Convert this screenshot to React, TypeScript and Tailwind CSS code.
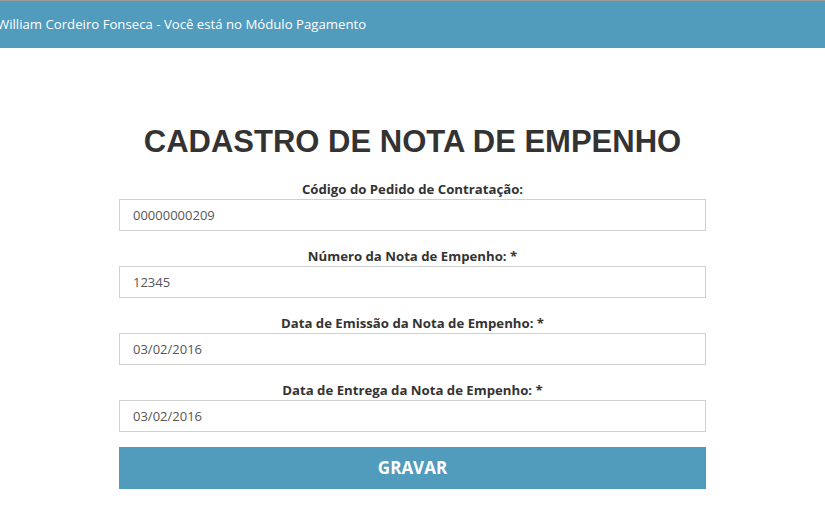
const fields = [
  { label: "Código do Pedido de Contratação:", value: "00000000209" },
  { label: "Número da Nota de Empenho: *", value: "12345" },
  { label: "Data de Emissão da Nota de Empenho: *", value: "03/02/2016" },
  { label: "Data de Entrega da Nota de Empenho: *", value: "03/02/2016" },
];

export default function App() {
  return (
    <div className="w-[825px] h-[510px] bg-white overflow-hidden font-['Open_Sans',sans-serif]">
      {/* Top bar */}
      <div className="border-t border-[#9a9a9a] bg-[#519bbd] h-[48px] flex items-center">
        <span className="text-white text-[13.2px] -ml-[3px] whitespace-nowrap">
          William Cordeiro Fonseca - Você está no Módulo Pagamento
        </span>
      </div>

      <div className="w-[587px] mx-auto pt-[76px]">
        <h1 className="text-center text-[#333] text-[31px] font-bold leading-[36px] whitespace-nowrap font-['Liberation_Sans',sans-serif]">
          CADASTRO DE NOTA DE EMPENHO
        </h1>

        <form className="mt-[20px] flex flex-col gap-[16px]">
          {fields.map((f) => (
            <div key={f.label} className="flex flex-col">
              <label className="text-center text-[13.2px] font-bold text-[#333] leading-[18px] mb-[1px]">
                {f.label}
              </label>
              <input
                readOnly
                value={f.value}
                className="h-[32px] border border-[#d0d0d0] px-[13px] text-[13px] text-[#555] outline-none"
              />
            </div>
          ))}
          <button
            type="button"
            className="-mt-[1px] h-[42px] bg-[#519bbd] text-white font-bold text-[17px]"
          >
            GRAVAR
          </button>
        </form>
      </div>
    </div>
  );
}
